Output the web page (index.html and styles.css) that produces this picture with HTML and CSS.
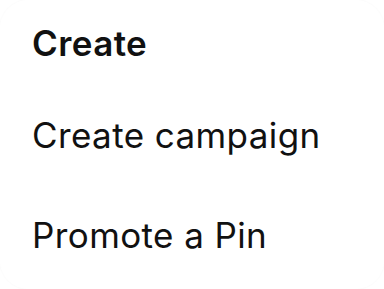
FILE: index.html
```html
<!DOCTYPE html>
<html lang="en">
<head>
<meta charset="utf-8">
<title>Create menu</title>
<link rel="stylesheet" href="styles.css">
</head>
<body>
<div class="menu">
  <h2 class="menu-title">Create</h2>
  <ul class="menu-list">
    <li class="menu-item">Create campaign</li>
    <li class="menu-item">Promote a Pin</li>
  </ul>
</div>
</body>
</html>
```

FILE: styles.css
```css
html, body {
  margin: 0;
  padding: 0;
  background: #ffffff;
}
body {
  width: 384px;
  height: 289px;
  overflow: hidden;
}
.menu {
  box-sizing: border-box;
  width: 384px;
  height: 289px;
  background: #ffffff;
  border-radius: 28px;
  box-shadow: 0 0 0 1px rgba(0, 0, 0, 0.012);
  padding: 21px 0 0 32px;
  font-family: Inter, "Noto Sans", sans-serif;
  color: #111111;
}
.menu-title {
  margin: 0 0 20px 0;
  font-size: 35px;
  line-height: 44px;
  font-weight: 600;
  letter-spacing: 0.4px;
}
.menu-list {
  list-style: none;
  margin: 0;
  padding: 0;
}
.menu-item {
  font-size: 35px;
  line-height: 44px;
  font-weight: 400;
  letter-spacing: 0.4px;
  padding: 28px 0;
}
```
